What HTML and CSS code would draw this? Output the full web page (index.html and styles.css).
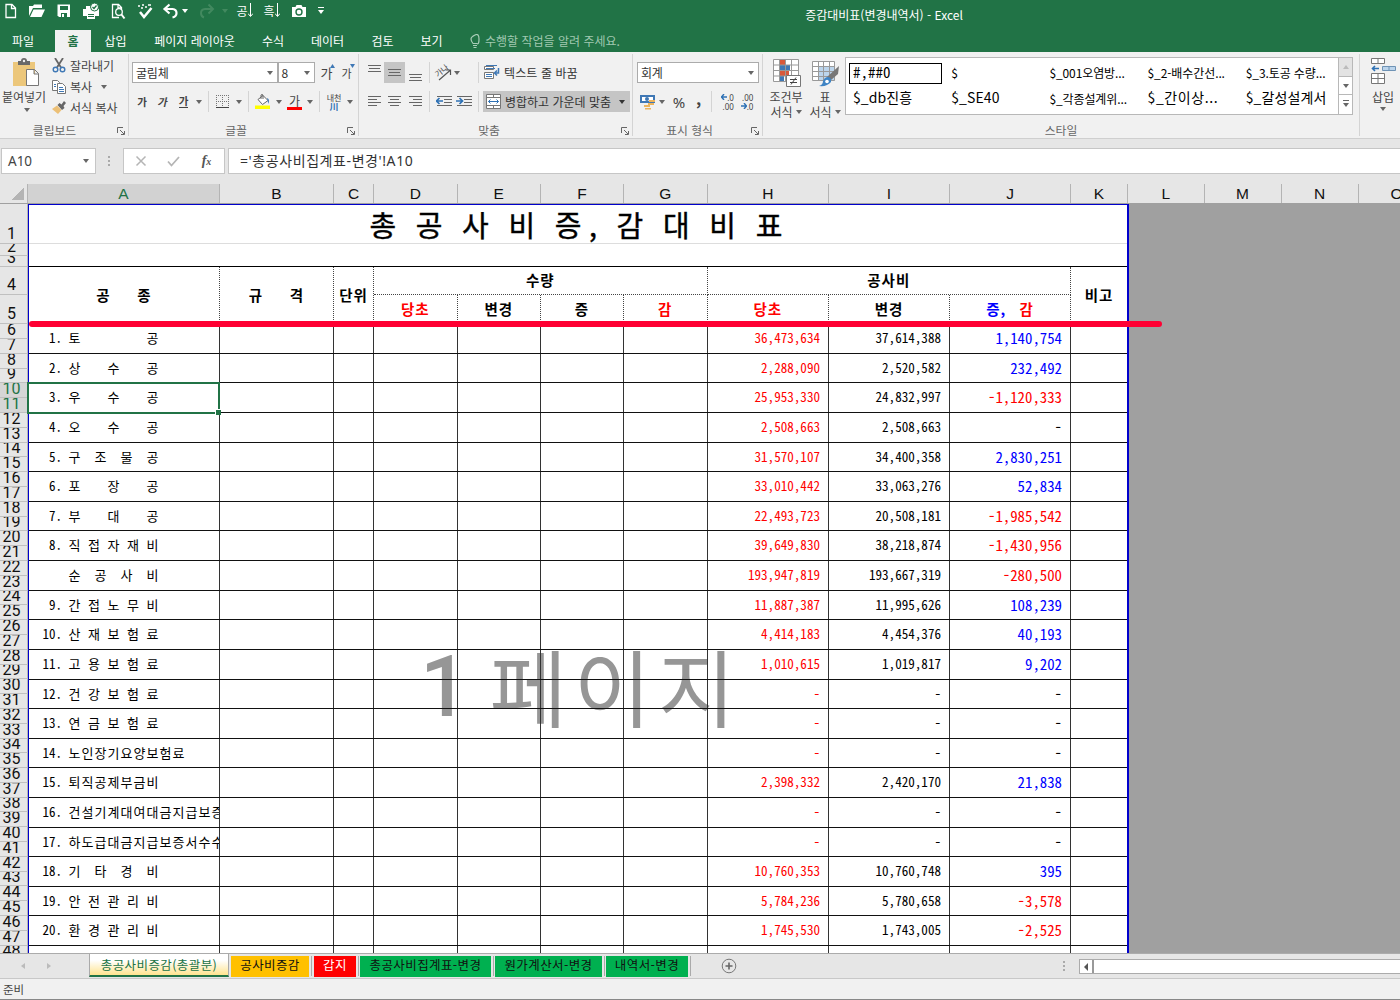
FILE: index.html
```html
<!DOCTYPE html>
<html lang="ko">
<head>
<meta charset="utf-8">
<title>증감대비표(변경내역서) - Excel</title>
<link rel="stylesheet" href="styles.css">
</head>
<body>
<div class="app">
<header class="titlebar">
  <div class="quick">
    <svg width="16" height="18"><path d="M4 2.500h6l3.500 3.500v9.500h-9.500zM9.500 2.500v4h4" class="wl"/></svg>
    <svg width="16" height="18"><path d="M0 14V4h4l1-1.500h8V6H4zM1 15 4.500 7.500H16L12.500 15z" fill="#fff"/></svg>
    <svg width="16" height="18"><path d="M1.500 2.500h12.500v12.500H3l-1.500-1.500z" fill="#fff"/><path d="M4 4h8v4H4zM5 11h6v4H5z" fill="#217346"/><path d="M6 12h2v3H6z" fill="#fff"/></svg>
    <svg width="16" height="18"><path d="M0 7h16v7H0zM3 4h6v3H3zM4 11h8v6H4z" fill="#fff"/><path d="M5 12.500h6M5 14.500h6" stroke="#217346"/><circle cx="11.500" cy="5" r="4" fill="#fff" stroke="#217346"/><path d="m9.500 5 1.500 1.500 2.500-3" fill="none" stroke="#217346" stroke-width="1.300"/></svg>
    <svg width="16" height="18"><path d="M9 15.500H2.500v-13h6l3 3V7M8 2.500V6h3.500" class="wl"/><circle cx="9" cy="10" r="3.300" class="wl"/><path d="m11.500 12.500 3 4" stroke="#fff" stroke-width="2"/></svg>
    <svg width="16" height="18"><path d="m3 10 4 5 7.500-9" fill="none" stroke="#fff" stroke-width="2.500"/><path d="M1 4h2M4 6h2M5 3h2M8 5h2M11 3h3" stroke="#fff" stroke-width="1.500"/></svg>
    <svg width="18" height="18"><path d="M3 7h7.500q4 .5 4 4t-4 4.500" fill="none" stroke="#fff" stroke-width="2.200"/><path d="M7.500 2.500 2.500 7l5 4.500" fill="none" stroke="#fff" stroke-width="2.200"/></svg>
    <i class="dd white"></i>
    <svg width="18" height="18"><path d="M14 7H7q-4 .5-4 4t3 4.500" fill="none" stroke="#42895f" stroke-width="2"/><path d="m10.500 2.500 4.500 4.500-4.500 4.500" fill="none" stroke="#42895f" stroke-width="2"/></svg>
    <i class="dd faint"></i>
    <span class="sort">공<svg width="5" height="15"><path d="M2.500 0v13M0 10.500l2.500 3 2.500-3" fill="none" stroke="#fff"/></svg></span>
    <span class="sort">흑<svg width="5" height="15"><path d="M2.500 0v13M0 10.500l2.500 3 2.500-3" fill="none" stroke="#fff"/></svg></span>
    <svg width="16" height="18"><path d="M1 5h3.500l1-2h5l1 2H15v10H1z" fill="#fff"/><circle cx="8" cy="10" r="3" fill="none" stroke="#217346" stroke-width="1.400"/></svg>
    <span class="more"><b></b><i class="dd white"></i></span>
  </div>
  <div class="doc">증감대비표(변경내역서) - Excel</div>
</header>
<nav class="tabs">
  <span>파일</span><span></span><span class="on">홈</span><span>삽입</span><span>페이지 레이아웃</span><span>수식</span><span>데이터</span><span>검토</span><span>보기</span>
  <span class="tell"><svg width="10" height="14"><path d="M3 9.500Q1 7 1 5t4-4 4 4-2 4.500zM3 11.500h4M3.500 13.500h3" fill="none" stroke="#a9cdb8" stroke-width="1.200"/></svg>수행할 작업을 알려 주세요.</span>
</nav>

<section class="ribbon">
  <div class="group g-clip">
    <div class="clip">
      <div class="big">
        <svg width="28" height="30"><path d="M1 4h22v24H1z" fill="#ecc77b"/><path d="M6 3h3q0-3 3-3t3 3h3v4H6z" fill="#696969"/><circle cx="12" cy="3" r="1.200" fill="#f1f1f1"/><path d="M14.500 11.500h8l4 4v12h-12zM22 11.500V16h4.500" fill="#fff" stroke="#777"/></svg>
        <span>붙여넣기</span><i class="dd"></i>
      </div>
      <div class="small">
        <span><svg width="14" height="15"><path d="m3 0 6 9.500M11 0 5 9.500" stroke="#666" stroke-width="1.800"/><circle cx="3.500" cy="11.500" r="2.300" fill="none" stroke="#3f78b5" stroke-width="1.400"/><circle cx="10.500" cy="11.500" r="2.300" fill="none" stroke="#3f78b5" stroke-width="1.400"/></svg>잘라내기</span>
        <span><svg width="14" height="14"><path d="M.5.5h5l2 2v8h-7z" fill="#fff" stroke="#777"/><path d="M5.500 3.500h5l3 3v7h-8z" fill="#fff" stroke="#777"/><path d="M7 7.500h4M7 9.500h5M7 11.500h5M2 4.500h2M2 6.500h2" stroke="#3f78b5"/></svg>복사<i class="dd"></i></span>
        <span><svg width="14" height="14"><path d="m0 8 5-3.500L9.500 9 6 13z" fill="#ecc077"/><path d="m5.500 4 2-2 2 1.500L12 0l2 2-2.500 3 1 2-2.500 2z" fill="#666"/></svg>서식 복사</span>
      </div>
    </div>
    <footer>클립보드<svg class="launch" width="8" height="8"><path d="M.5 6V.5H6M3 3l4 4M7.500 4v3.500H4" fill="none" stroke="#666"/></svg></footer>
  </div>

  <div class="group g-font">
    <div class="line font-pick">
      <span class="combo">굴림체<i class="dd"></i></span><span class="combo">8<i class="dd"></i></span>
      <span class="grow">가<svg width="5" height="4"><path d="M0 4 2.500 0 5 4z" fill="#3f78b5"/></svg></span>
      <span class="grow sm">가<svg width="5" height="4"><path d="M0 0 2.500 4 5 0z" fill="#3f78b5"/></svg></span>
    </div>
    <div class="line font-tools">
      <b>가</b><b class="it">가</b><b class="un">가</b><i class="dd"></i><i class="sep"></i>
      <svg width="13" height="13"><path d="M.5 0v12M6.500 0v12M12.500 0v12M0 .5h13M0 6.500h13" stroke="#777" stroke-dasharray="1 1"/><path d="M0 12.500h13" stroke="#444"/></svg>
      <i class="dd"></i><i class="sep"></i>
      <svg width="16" height="15"><path d="m3 5.500 5-4 5 5-5.500 4z" fill="#fff" stroke="#666"/><path d="M6 5V1q1-1 2 0v4" fill="none" stroke="#666"/><path d="M12 4q3 1 1.500 6z" fill="#3f78b5"/><path d="M0 11.500h15V15H0z" fill="#ff0"/></svg>
      <i class="dd"></i><b class="red-a">가</b><i class="dd"></i><i class="sep"></i>
      <span class="ruby">내천<em>川</em></span><i class="dd"></i>
    </div>
    <footer>글꼴<svg class="launch" width="8" height="8"><path d="M.5 6V.5H6M3 3l4 4M7.500 4v3.500H4" fill="none" stroke="#666"/></svg></footer>
  </div>

  <div class="group g-align">
    <div class="line align-a">
      <svg width="13" height="16"><path d="M0 .5h13M1 3.500h11M0 6.500h13" class="gl"/></svg>
      <span class="pressed"><svg width="13" height="16"><path d="M0 4.500h13M1 7.500h11M0 10.500h13" class="gl"/></svg></span>
      <svg width="13" height="16"><path d="M0 9.500h13M1 12.500h11M0 15.500h13" class="gl"/></svg>
      <i class="sep"></i>
      <span class="rot"><em>가나</em><svg width="17" height="16"><path d="M4 15 15 5.500M10.500 5h5v5" fill="none" stroke="#555" stroke-width="1.200"/></svg></span>
      <i class="dd"></i><span></span><i class="sep"></i>
      <span class="wrap"><svg width="16" height="15"><path d="M.5 1.500h9v3h-9zM.5 7.500h9v6h-9z" fill="#fff" stroke="#777"/><path d="M2 .5h11M2 3.500h9M2 9.500h6M2 11.500h6" stroke="#3f78b5"/><path d="M14.500 3v5H11M13 5.500 10.500 8l2.500 2.500" fill="none" stroke="#3f78b5" stroke-width="1.500"/></svg>텍스트 줄 바꿈</span>
    </div>
    <div class="line align-b">
      <svg width="13" height="12"><path d="M0 .5h13M0 3.500h9M0 6.500h13M0 9.500h9" class="gl"/></svg>
      <svg width="13" height="12"><path d="M0 .5h13M2 3.500h9M0 6.500h13M2 9.500h9" class="gl"/></svg>
      <svg width="13" height="12"><path d="M0 .5h13M4 3.500h9M0 6.500h13M4 9.500h9" class="gl"/></svg>
      <i class="sep"></i>
      <svg width="16" height="12"><path d="M1 .5h15M8 3.500h8M8 6.500h8M1 9.500h15" class="gl"/><path d="M0 5h7M3.500 2 .5 5l3 3" fill="none" stroke="#2f72b5" stroke-width="1.700"/></svg>
      <svg width="16" height="12"><path d="M1 .5h15M8 3.500h8M8 6.500h8M1 9.500h15" class="gl"/><path d="M0 5h6M3.500 2l3 3-3 3" fill="none" stroke="#2f72b5" stroke-width="1.700"/></svg>
      <i class="sep"></i>
      <span class="merge"><svg width="15" height="15"><path d="M.5.5h14v14H.5zM.5 3.500h14M.5 11.500h14M7.500.5v3M7.500 11.500v3" fill="#fff" stroke="#777"/><path d="M2.500 7.500h10M4.500 5.500l-2 2 2 2M10.500 5.500l2 2-2 2" fill="none" stroke="#2f72b5"/></svg><span>병합하고 가운데 맞춤</span><i class="dd dark"></i></span>
    </div>
    <footer>맞춤<svg class="launch" width="8" height="8"><path d="M.5 6V.5H6M3 3l4 4M7.500 4v3.500H4" fill="none" stroke="#666"/></svg></footer>
  </div>

  <div class="group g-num">
    <div class="line"><span class="combo wide">회계<i class="dd"></i></span></div>
    <div class="line num-tools">
      <svg width="16" height="16"><path d="M0 1h15v8H0z" fill="#3f78b5"/><path d="M2 3h11v4H2z" fill="#fff"/><circle cx="7" cy="5" r="2" fill="#3f78b5"/><path d="M9 6h6v2H9zM8 9h6v2H8zM4 11h6v2H4zM5 14h6v1.500H5z" fill="#ecb45d"/></svg>
      <i class="dd"></i><b class="pct">%</b><b class="comma">,</b><i class="sep"></i>
      <span class="dec"><u><svg width="6" height="6"><path d="M0 3h6M3 0 .5 3 3 6" fill="none" stroke="#2f72b5" stroke-width="1.400"/></svg>.0</u><u>.00</u></span>
      <span class="dec"><u>.00</u><u><svg width="6" height="6"><path d="M0 3h6M3 0l2.500 3L3 6" fill="none" stroke="#2f72b5" stroke-width="1.400"/></svg>.0</u></span>
    </div>
    <footer>표시 형식<svg class="launch" width="8" height="8"><path d="M.5 6V.5H6M3 3l4 4M7.500 4v3.500H4" fill="none" stroke="#666"/></svg></footer>
  </div>

  <div class="group g-style">
    <div class="styles">
      <div class="big">
        <svg width="29" height="29"><path d="M1.500.5h25v22h-25z" fill="#fff"/><path d="M8 1h5v5H8zM8 12h9v5H8z" fill="#d9593a"/><path d="M8 6h10v6H8zM8 17h4v5H8z" fill="#3f78b5"/><path d="M1.500.5h25v22h-25zM7.500.5v22M13.500.5v22M19.500.5v22M1.500 6h25M1.500 11.500h25M1.500 17h25" fill="none" stroke="#999"/><path d="M14.500 16.500h14v11h-14z" fill="#fff" stroke="#777"/><path d="M18 20.500h7M18 23.500h7M24 18.500l-5 7" stroke="#444"/></svg>
        <span>조건부</span><span>서식 <i class="dd"></i></span>
      </div>
      <div class="big">
        <svg width="29" height="29"><path d="M1.500 2.500h22v19h-22z" fill="#fff"/><path d="M7 7.500h17v14H7z" fill="#bcd5ec"/><path d="M1.500 2.500h22v19h-22zM7.500 2.500v19M12.500 2.500v19M18.500 2.500v19M1.500 7.500h22M1.500 12.500h22M1.500 17.500h22" fill="none" stroke="#999"/><path d="m28 7-1 8-7 6-4-3z" fill="#777"/><path d="M16 18q5 0 4 5-4 5-12 4 4-1 4-5 1-3 4-4z" fill="#3f84c4"/><circle cx="16" cy="22.500" r="1.800" fill="#fff"/></svg>
        <span>표</span><span>서식 <i class="dd"></i></span>
      </div>
      <div class="gallery">
        <span class="sel mono">#,##0</span><span class="half">$</span><span>$_001오염방...</span><span>$_2-배수간선...</span><span>$_3.토공 수량...</span>
        <span class="lg">$_db진흥</span><span class="lg">$_SE40</span><span>$_각종설계위...</span><span class="lg sp">$_간이상...</span><span class="lg">$_갈성설계서</span>
      </div>
      <div class="gscroll"><b class="off"><i class="dd up"></i></b><b><i class="dd"></i></b><b class="exp"><i class="dd"></i></b></div>
    </div>
    <footer>스타일</footer>
  </div>

  <div class="group g-cells">
    <div class="big">
      <svg width="26" height="28"><path d="M1.500.5h13v5h-13zM8 .5v5M1.500 15.500h13v10h-13zM8 15.500v10M1.500 20.500h13" fill="#fff" stroke="#777"/><path d="M12.500 8.500h13v4h-13zM19 8.500v4" fill="#bcd5ec" stroke="#6f93b5"/><path d="M2 10.500h7M5 8l-2.500 2.500L5 13" fill="none" stroke="#2f72b5" stroke-width="1.600"/></svg>
      <span>삽입</span><i class="dd"></i>
    </div>
  </div>
</section>

<section class="fbar">
  <div class="namebox">A10<i class="dd"></i></div>
  <div class="dots"><b></b><b></b><b></b></div>
  <div class="fbtns">
    <svg width="12" height="12"><path d="m1.500 1.500 9 9m0-9-9 9" stroke="#b5b5b5" stroke-width="1.500"/></svg>
    <svg width="13" height="12"><path d="m1 6.500 3.500 4L12 2" fill="none" stroke="#b5b5b5" stroke-width="1.800"/></svg>
    <em>f<small>x</small></em>
  </div>
  <div class="formula">='총공사비집계표-변경'!A10</div>
</section>

<section class="colheads">
  <span class="corner"></span><span class="on">A</span><span>B</span><span>C</span><span>D</span><span>E</span><span>F</span><span>G</span><span>H</span><span>I</span><span>J</span><span>K</span><span>L</span><span>M</span><span>N</span><span>O</span>
</section>

<main class="sheet">
  <div class="rowheads">
    <span class="r1">1</span><span class="r2">2</span><span class="r3">3</span><span class="r4">4</span><span class="r5">5</span><span>6</span><span>7</span><span>8</span><span>9</span><span class="on">10</span><span class="on">11</span><span>12</span><span>13</span><span>14</span><span>15</span><span>16</span><span>17</span><span>18</span><span>19</span><span>20</span><span>21</span><span>22</span><span>23</span><span>24</span><span>25</span><span>26</span><span>27</span><span>28</span><span>29</span><span>30</span><span>31</span><span>32</span><span>33</span><span>34</span><span>35</span><span>36</span><span>37</span><span>38</span><span>39</span><span>40</span><span>41</span><span>42</span><span>43</span><span>44</span><span>45</span><span>46</span><span>47</span><span>48</span>
  </div>
  <div class="page">
    <div class="watermark"><b>1</b> <span>페이지</span></div>
    <h1>총 공 사 비 증<span>,</span> 감 대 비 표</h1>
    <div class="blank"></div>
    <div class="head">
      <b class="tall a">공    종</b><b class="tall b">규    격</b><b class="tall">단위</b>
      <b class="qty">수량</b><b class="cost">공사비</b><b class="tall last">비고</b>
      <b class="red">당초</b><b>변경</b><b>증</b><b class="red">감</b><b class="red">당초</b><b>변경</b><b class="blue">증,  <span class="red">감</span></b>
    </div>
    <div class="row"><p><s>1.</s>토          공</p><i></i><i></i><i></i><i></i><i></i><i></i><u class="red">36,473,634</u><u>37,614,388</u><u class="diff">1,140,754</u><i></i></div>
    <div class="row"><p><s>2.</s>상    수    공</p><i></i><i></i><i></i><i></i><i></i><i></i><u class="red">2,288,090</u><u>2,520,582</u><u class="diff">232,492</u><i></i></div>
    <div class="row"><p><s>3.</s>우    수    공</p><i></i><i></i><i></i><i></i><i></i><i></i><u class="red">25,953,330</u><u>24,832,997</u><u class="diff red">-1,120,333</u><i></i></div>
    <div class="row"><p><s>4.</s>오    수    공</p><i></i><i></i><i></i><i></i><i></i><i></i><u class="red">2,508,663</u><u>2,508,663</u><u class="diff black">-</u><i></i></div>
    <div class="row"><p><s>5.</s>구  조  물  공</p><i></i><i></i><i></i><i></i><i></i><i></i><u class="red">31,570,107</u><u>34,400,358</u><u class="diff">2,830,251</u><i></i></div>
    <div class="row"><p><s>6.</s>포    장    공</p><i></i><i></i><i></i><i></i><i></i><i></i><u class="red">33,010,442</u><u>33,063,276</u><u class="diff">52,834</u><i></i></div>
    <div class="row"><p><s>7.</s>부    대    공</p><i></i><i></i><i></i><i></i><i></i><i></i><u class="red">22,493,723</u><u>20,508,181</u><u class="diff red">-1,985,542</u><i></i></div>
    <div class="row"><p><s>8.</s>직 접 자 재 비</p><i></i><i></i><i></i><i></i><i></i><i></i><u class="red">39,649,830</u><u>38,218,874</u><u class="diff red">-1,430,956</u><i></i></div>
    <div class="row"><p><s></s>순  공  사  비</p><i></i><i></i><i></i><i></i><i></i><i></i><u class="red">193,947,819</u><u>193,667,319</u><u class="diff red">-280,500</u><i></i></div>
    <div class="row"><p><s>9.</s>간 접 노 무 비</p><i></i><i></i><i></i><i></i><i></i><i></i><u class="red">11,887,387</u><u>11,995,626</u><u class="diff">108,239</u><i></i></div>
    <div class="row"><p><s>10.</s>산 재 보 험 료</p><i></i><i></i><i></i><i></i><i></i><i></i><u class="red">4,414,183</u><u>4,454,376</u><u class="diff">40,193</u><i></i></div>
    <div class="row"><p><s>11.</s>고 용 보 험 료</p><i></i><i></i><i></i><i></i><i></i><i></i><u class="red">1,010,615</u><u>1,019,817</u><u class="diff">9,202</u><i></i></div>
    <div class="row"><p><s>12.</s>건 강 보 험 료</p><i></i><i></i><i></i><i></i><i></i><i></i><u class="red">-</u><u>-</u><u class="diff black">-</u><i></i></div>
    <div class="row"><p><s>13.</s>연 금 보 험 료</p><i></i><i></i><i></i><i></i><i></i><i></i><u class="red">-</u><u>-</u><u class="diff black">-</u><i></i></div>
    <div class="row"><p><s>14.</s>노인장기요양보험료</p><i></i><i></i><i></i><i></i><i></i><i></i><u class="red">-</u><u>-</u><u class="diff black">-</u><i></i></div>
    <div class="row"><p><s>15.</s>퇴직공제부금비</p><i></i><i></i><i></i><i></i><i></i><i></i><u class="red">2,398,332</u><u>2,420,170</u><u class="diff">21,838</u><i></i></div>
    <div class="row"><p><s>16.</s>건설기계대여대금지급보증</p><i></i><i></i><i></i><i></i><i></i><i></i><u class="red">-</u><u>-</u><u class="diff black">-</u><i></i></div>
    <div class="row"><p><s>17.</s>하도급대금지급보증서수수</p><i></i><i></i><i></i><i></i><i></i><i></i><u class="red">-</u><u>-</u><u class="diff black">-</u><i></i></div>
    <div class="row"><p><s>18.</s>기  타  경  비</p><i></i><i></i><i></i><i></i><i></i><i></i><u class="red">10,760,353</u><u>10,760,748</u><u class="diff">395</u><i></i></div>
    <div class="row"><p><s>19.</s>안 전 관 리 비</p><i></i><i></i><i></i><i></i><i></i><i></i><u class="red">5,784,236</u><u>5,780,658</u><u class="diff red">-3,578</u><i></i></div>
    <div class="row"><p><s>20.</s>환 경 관 리 비</p><i></i><i></i><i></i><i></i><i></i><i></i><u class="red">1,745,530</u><u>1,743,005</u><u class="diff red">-2,525</u><i></i></div>
    <div class="row"><p></p><i></i><i></i><i></i><i></i><i></i><i></i><i></i><i></i><i></i><i></i></div>
  </div>
  <div class="selection"><b></b></div>
  <div class="marker"></div>
</main>

<section class="sheetbar">
  <div class="navs"><i></i><i class="r"></i></div>
  <div class="stabs">
    <span class="cur">총공사비증감(총괄분)</span><span class="or">공사비증감</span><span class="rd">갑지</span><span class="g1">총공사비집계표-변경</span><span class="g2">원가계산서-변경</span><span class="g3">내역서-변경</span>
  </div>
  <svg class="plus" width="16" height="16"><circle cx="8" cy="8" r="6.800" fill="none" stroke="#777"/><path d="M8 4.500v7M4.500 8h7" stroke="#666" stroke-width="1.600"/></svg>
  <div class="dots"><b></b><b></b><b></b></div>
  <div class="hscroll"><span><i></i></span><b></b></div>
</section>
<footer class="status">준비</footer>
</div>
</body>
</html>
```
FILE: styles.css
```css
* { box-sizing: border-box; }
body { margin: 0; overflow: hidden; font-family: "Noto Sans CJK KR", sans-serif; font-size: 12px; color: #444; }
.app { width: 1400px; height: 1000px; overflow: hidden; display: flex; flex-direction: column; background: #e6e6e6; }
svg { display: block; flex: none; }
i, em { font-style: normal; }
.wl { fill: none; stroke: #fff; stroke-width: 1.300; }
.gl { fill: none; stroke: #666; }

.dd { display: block; width: 0; height: 0; border: 3px solid transparent; border-top: 4px solid #666; border-bottom: 0; }
.dd.white { border-top-color: #fff; }
.dd.faint { border-top-color: #42895f; }
.dd.dark { border-top-color: #333; }
.dd.up { border-top: 0; border-bottom: 4px solid #bbb; }

/* title bar */
.titlebar { height: 30px; background: #217346; display: flex; }
.quick { flex: none; display: grid; width: 334px; height: 21px; align-items: center; justify-items: center; grid-template-columns: 20px 34px 20px 34px 20px 34px 18px 10px 34px 2px 37px 17px 37px 7px; }
.sort { display: flex; color: #fff; font-size: 12px; line-height: 16px; align-items: center; }
.more { display: grid; gap: 2px; justify-items: center; }
.more b { width: 6px; height: 1px; background: #fff; }
.doc { flex: none; width: 1100px; text-align: center; color: #fff; font-size: 12px; line-height: 30px; }

/* ribbon tabs */
.tabs { height: 22px; background: #217346; color: #fff; display: grid; grid-template-columns: 46px 9px 36px 49px 109px 48px 61px 49px 49px 1fr; line-height: 22px; text-align: center; }
.tabs .on { background: #f1f1f1; color: #217346; font-weight: bold; }
.tabs .tell { display: flex; align-items: center; gap: 5px; padding-left: 14px; color: #a0c8b0; }

/* ribbon */
.ribbon { height: 87px; background: #f1f1f1; border-bottom: 1px solid #cfcfcf; display: flex; flex: none; }
.group { position: relative; height: 82px; margin-top: 2px; border-right: 1px solid #d4d4d4; display: flex; flex-direction: column; flex: none; padding-top: 5px; }
.group footer { margin-top: auto; height: 15px; line-height: 17px; font-size: 11.800px; color: #666; text-align: center; display: flex; justify-content: center; }
.launch { position: absolute; right: 3px; bottom: 1px; }
.g-clip { width: 129px; padding-top: 4px; }
.g-clip footer { padding-right: 19px; }
.g-font { width: 230px; }
.g-font footer { padding-right: 15px; }
.g-align { width: 274px; }
.g-align footer { padding-right: 13px; }
.g-num { width: 130px; }
.g-num footer { padding-right: 16px; }
.g-style { width: 597px; padding-top: 3px; }
.g-cells { width: 41px; border-right: 0; padding-top: 4px; }

.clip { display: flex; height: 66px; }
.big { display: flex; flex-direction: column; align-items: center; line-height: 15px; }
.clip .big { width: 48px; gap: 2px; letter-spacing: -.1px; white-space: nowrap; }
.clip .big svg { margin: 0 0 -1px 4px; }
.clip .big .dd { margin: 2px 0 0 5px; }
.clip .small { margin-left: 4px; display: grid; grid-template-rows: 21px 21px 21px; margin-top: -3px; }
.clip .small span { display: flex; align-items: center; gap: 4px; white-space: nowrap; }
.clip .small .dd { margin-left: 5px; }

.line { display: grid; height: 21px; align-items: center; justify-items: center; margin-top: 3px; }
.line + .line { margin-top: 8px; }
.sep { width: 1px; height: 21px; background: #d4d4d4; }
.combo { height: 21px; width: 100%; border: 1px solid #ababab; background: #fff; display: flex; align-items: center; justify-content: space-between; padding: 0 4px 0 3px; color: #333; letter-spacing: -.2px; }
.combo.wide { width: 122px; }
.font-pick { margin-left: 3px; grid-template-columns: 146px 37px 26px 14px; }
.font-pick .combo + .combo { margin-left: -1px; }
.grow { display: flex; align-items: flex-start; font-size: 13px; line-height: 18px; }
.grow svg { margin-left: -2px; }
.grow.sm { font-size: 11px; }
.font-tools { margin-left: 3px; grid-template-columns: 20px 21px 21px 10px 9px 19px 14px 5px 23px 9px 23px 8px 11px 18px 14px; }
.font-tools b { font-size: 10.500px; line-height: 12px; }
.font-tools .it { transform: skewX(-12deg); }
.font-tools .un { border-bottom: 1px solid #444; }
.font-tools .red-a { font-size: 12px; font-weight: normal; width: 15px; text-align: center; border-bottom: 3px solid #f00; line-height: 13px; }
.ruby { font-size: 8px; line-height: 9px; display: grid; justify-items: center; }
.ruby em { font-size: 9px; line-height: 9px; font-weight: bold; color: #2f72b5; }

.align-a { margin-left: 5px; grid-template-columns: 20px 21px 20px 8px 20px 8px 13px 9px 1fr; }
.align-b { margin-left: 5px; grid-template-columns: 20px 21px 20px 8px 21px 20px 9px 1fr; }
.pressed { width: 21px; height: 21px; background: #c5c5c5; display: grid; place-items: center; }
.rot { display: grid; }
.rot > * { grid-area: 1 / 1; }
.rot em { font-size: 8px; line-height: 8px; transform: translate(-1px, 1px) rotate(-38deg); height: 8px; }
.wrap { justify-self: start; display: flex; gap: 4px; padding-left: 1px; align-items: center; color: #333; white-space: nowrap; letter-spacing: .1px; }
.merge { justify-self: start; display: flex; align-items: center; width: 147px; height: 21px; background: #c5c5c5; padding: 0 5px 0 3px; gap: 4px; color: #333; white-space: nowrap; }
.merge .dd { margin-left: auto; }

.g-num .line { margin-left: 4px; justify-items: start; }
.g-num .num-tools { grid-template-columns: 21px 8px 26px 13px 13px 19px 20px; justify-items: center; }
.pct { font: 15px "Noto Sans", sans-serif; }
.comma { font-size: 16px; line-height: 10px; margin-top: -8px; }
.dec { font: 8px/9px "Noto Sans", sans-serif; display: grid; justify-items: end; }
.dec u { text-decoration: none; display: flex; align-items: center; }

.styles { display: flex; height: 60px; }
.styles .big { width: 32px; }
.styles .big:first-child { width: 46px; }
.styles .big svg { margin: 2px 0 1px; }
.styles .big span { display: flex; gap: 3px; align-items: center; line-height: 15px; }
.gallery { margin-left: 4px; width: 494px; flex: none; height: 58px; background: #fff; border: 1px solid #b8b8b8; display: grid; grid-template-columns: repeat(5, 98.200px); grid-template-rows: 21px 21px; row-gap: 5px; padding: 5px 0 0 3px; color: #000; overflow: hidden; }
.gallery span { padding-left: 4px; line-height: 19px; white-space: nowrap; font-size: 12px; letter-spacing: -.1px; }
.gallery .sel { width: 93px; height: 21px; border: 1px solid #000; padding-left: 3px; line-height: 16px; }
.gallery .mono { font-size: 15px; font-feature-settings: "hwid"; letter-spacing: 0; }
.gallery .lg { font-size: 14px; line-height: 17px; letter-spacing: .1px; }
.gallery .sp { letter-spacing: .6px; }
.gscroll { width: 15px; height: 58px; display: grid; grid-template-rows: 20px 18px 20px; margin-left: -1px; }
.gscroll b { border: 1px solid #b8b8b8; margin-top: -1px; background: #fff; display: grid; place-items: center; }
.gscroll b:first-child { margin-top: 0; }
.gscroll .off { background: #e3e3e3; }
.gscroll .exp .dd { position: relative; }
.gscroll .exp .dd::before { content: ""; position: absolute; left: -3px; top: -7px; width: 6px; height: 1px; background: #666; }
.g-cells .big { gap: 3px; padding-left: 5px; }

/* formula bar */
.fbar { height: 45px; flex: none; display: flex; align-items: flex-start; padding-top: 9px; font-family: "Noto Sans", "Noto Sans CJK KR", sans-serif; }
.fbar > div { height: 26px; }
.namebox, .fbtns, .formula { background: #fff; border: 1px solid #c6c6c6; }
.namebox { width: 95px; margin-left: 1px; padding: 0 6px; font-size: 13.500px; display: flex; align-items: center; justify-content: space-between; }
.dots { display: grid; align-content: center; gap: 2px; }
.dots b { width: 2px; height: 2px; background: #aaa; }
.fbar .dots { width: 27px; padding-left: 12px; }
.fbtns { width: 102px; display: grid; grid-template-columns: 33px 33px 33px; align-items: center; justify-items: center; }
.fbtns em { font: italic bold 14px "Liberation Serif", serif; color: #555; }
.fbtns small { font-size: 10px; }
.formula { flex: 1; margin-left: 3px; border-right: 0; padding-left: 11px; font-size: 14px; line-height: 23px; color: #333; letter-spacing: .58px; }

/* column letters */
.colheads { height: 20px; flex: none; display: grid; grid-template-columns: 28px 192px 114px 40px 83.500px 83.500px 83px 83.500px 121.500px 121px 121px 57px 76.500px 77px 77px 77px; font: 15.500px/20px "Liberation Sans", sans-serif; color: #111; text-align: center; overflow: hidden; border-bottom: 1px solid #a0a0a0; }
.colheads span { border-right: 1px solid #b4b4b4; }
.colheads .on { background: #d2d2d2; color: #217346; border-bottom: 2px solid #217346; }
.corner { background: linear-gradient(135deg, transparent 50%, #b4b4b4 50%) 12px 4px / 12px 12px no-repeat; }

/* sheet */
.sheet { position: relative; height: 749px; flex: none; overflow: hidden; background: #a0a0a0; display: flex; }
.rowheads { width: 28px; height: 760px; background: #e6e6e6; font: 16px/16px Roboto, sans-serif; color: #111; display: grid; grid-template-rows: 40px 11.500px 11px 28.500px 29.200px; grid-auto-rows: 14.810px; align-content: start; }
.rowheads span { overflow: hidden; display: flex; align-items: flex-end; justify-content: center; padding-right: 4px; border-bottom: 1px solid #c0c0c0; border-right: 1px solid #b4b4b4; }
.rowheads .on { background: #d6d6d6; color: #217346; }
.rowheads .r1, .rowheads .r4, .rowheads .r5 { padding-bottom: 1px; }
.page { position: relative; width: 1101px; height: 760px; background: #fff; border: solid #00c; border-width: 1px 2px 0 1px; flex: none; display: flex; flex-direction: column; color: #000; }
.watermark { position: absolute; left: 391px; top: 432px; font: 85px/96px Roboto, sans-serif; color: #969696; white-space: nowrap; }
.watermark b { font-weight: 500; position: relative; top: -5px; }
.watermark span { font: 84px/96px "Noto Sans CJK KR", sans-serif; letter-spacing: 7px; }
h1 { margin: 0; height: 39px; flex: none; border-bottom: 1px solid #ddd; font-size: 29px; line-height: 38px; font-weight: 400; -webkit-text-stroke: .4px #000; text-align: center; letter-spacing: 4.220px; font-feature-settings: "hwid"; word-spacing: -3.270px; }
h1 span { letter-spacing: .95px; }
.blank { height: 23px; flex: none; border-bottom: 1px solid #000; }
.head { display: grid; flex: none; height: 57.200px; grid-template-columns: 191px 114px 40px 83.500px 83.500px 83px 83.500px 121.500px 121px 121px 56px; grid-template-rows: 28px 29.200px; font-size: 14.500px; letter-spacing: 1px; position: relative; white-space: pre; }
.head b { display: flex; align-items: center; justify-content: center; border-right: 1px dotted #444; padding-bottom: 2px; }
.head .tall { grid-row: 1 / 3; }
.head .a, .head .b { word-spacing: 1.600px; }
.head .qty { grid-column: 4 / 8; border-bottom: 1px dotted #444; }
.head .cost { grid-column: 8 / 11; border-bottom: 1px dotted #444; }
.head .last { border-right: 0; grid-column: 11; }
.head .blue { word-spacing: 1.500px; }
.red, .row .red { color: #f00; }
.blue { color: #00f; }
.row { position: relative; height: 29.620px; flex: none; display: grid; grid-template-columns: 191px 114px 40px 83.500px 83.500px 83px 83.500px 121.500px 121px 121px 56px; border-bottom: 1px solid #111; line-height: 28px; }
.row > * { border-right: 1px solid #333; margin: 0; }
.row > :last-child { border-right: 0; }
.row p { overflow: hidden; white-space: pre; font-size: 13px; letter-spacing: 1.040px; font-feature-settings: "hwid"; word-spacing: -1.040px; display: flex; }
.row s { text-decoration: none; width: 33px; margin-right: 6.500px; text-align: right; letter-spacing: 0; flex: none; }
.row u { text-decoration: none; text-align: right; padding-right: 8px; font-size: 13.100px; font-feature-settings: "hwid"; }
.row .diff { font-size: 14.800px; color: #00f; line-height: 27px; }
.row .diff.red { color: #f00; }
.row .diff.black { color: #000; }
.selection { position: absolute; left: 27px; top: 178px; width: 193px; height: 32px; border: 2px solid #217346; }
.selection b { position: absolute; right: -3px; bottom: -3px; width: 6px; height: 6px; background: #217346; border: solid #fff; border-width: 1px 0 0 1px; }
.marker { position: absolute; left: 29px; top: 117px; width: 1133px; height: 6px; border-radius: 3px; background: #ff0033; }

/* sheet tabs */
.sheetbar { height: 26px; flex: none; border-top: 1px solid #ababab; border-bottom: 1px solid #c8c8c8; display: flex; }
.navs { width: 89px; display: flex; gap: 22px; align-items: center; padding-left: 21px; }
.navs i { border: 3.500px solid transparent; border-right: 4px solid #bbb; border-left: 0; }
.navs .r { border-left: 4px solid #bbb; border-right: 0; }
.stabs { display: flex; width: 600px; color: #111; text-align: center; font-size: 12.500px; letter-spacing: .4px; line-height: 18px; white-space: nowrap; }
.stabs span { height: 21px; margin-top: 2px; margin-right: 5px; flex: none; position: relative; }
.stabs span + span::after { content: ""; position: absolute; right: -3px; top: 0; width: 1px; height: 20px; background: #aaa; }
.stabs .cur { width: 140px; height: 23px; margin: 0 2px 0 0; line-height: 22px; color: #217346; background: linear-gradient(#fff 30%, #ffe48f); border-bottom: 2px solid #217346; border-left: 1px solid #aaa; border-right: 1px solid #aaa; }
.or { width: 78px; background: #ffc000; }
.rd { width: 42px; background: #f00; color: #fff; }
.stabs .rd { margin-right: 4px; }
.g1 { width: 131px; background: #00b050; }
.stabs .g1, .stabs .g2 { margin-right: 4px; }
.g2 { width: 107px; background: #00b050; }
.g3 { width: 82px; background: #00b050; }
.plus { margin: 4px 0 0 32px; }
.sheetbar .dots { margin-left: 326px; width: 16px; }
.hscroll { margin: 5px 0 0; height: 15px; flex: 1; display: flex; border: 1px solid #ababab; border-right: 0; background: #fff; }
.hscroll span { width: 14px; display: grid; place-items: center; border-right: 2px solid #999; }
.hscroll i { border: 4px solid transparent; border-right: 4px solid #555; border-left: 0; }
.status { height: 21px; flex: none; background: #f1f1f1; border-bottom: 1px solid #888; padding-left: 3px; font-size: 11.500px; line-height: 20px; }
```
